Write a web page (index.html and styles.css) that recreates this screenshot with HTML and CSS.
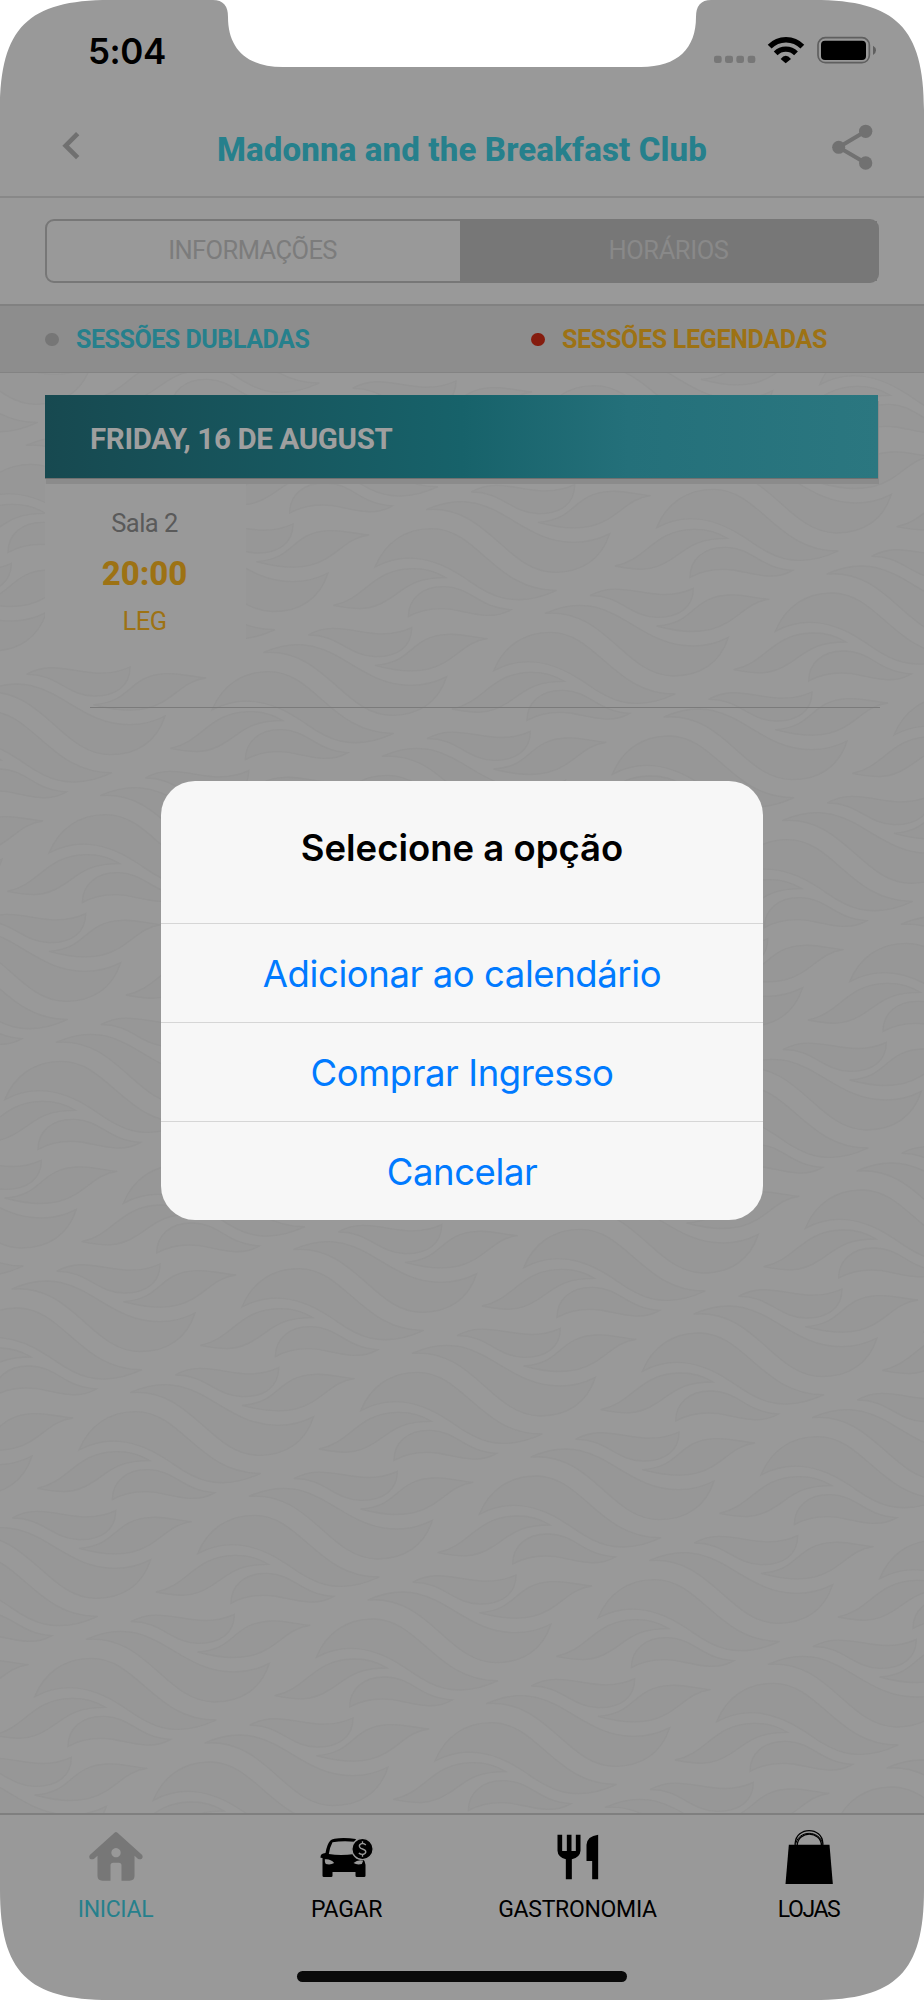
FILE: index.html
```html
<!DOCTYPE html>
<html lang="pt-BR">
<head>
    <meta charset="UTF-8">
    <meta name="viewport" content="width=device-width, initial-scale=1.0">
    <title>Madonna and the Breakfast Club</title>
    <link rel="stylesheet" href="styles.css">
</head>
<body>
    <div class="screen">
        <!-- Status bar -->
        <div class="status-bar">
            <span class="clock">5:04</span>
            <svg class="status-icons" viewBox="756 105 489 90">
                <g fill="#777">
                    <rect x="756" y="167" width="23" height="22" rx="7"/>
                    <rect x="789" y="167" width="24" height="22" rx="7"/>
                    <rect x="823" y="167" width="23" height="22" rx="7"/>
                    <rect x="857" y="167" width="23" height="22" rx="7"/>
                </g>
                <g fill="none" stroke="#000" stroke-width="16">
                    <path d="M923 140 A68 68 0 0 1 1021 140"/>
                    <path d="M941 160 A43 43 0 0 1 1002 160"/>
                </g>
                <path d="M956 177 Q971 158 987 177 L971 190 Z"/>
                <rect x="1068" y="113" width="154" height="75" rx="22" fill="none" stroke="#5f5f5f" stroke-width="5"/>
                <rect x="1077" y="122" width="135" height="58" rx="12"/>
                <path d="M1233 137 Q1242 142 1242 151 Q1242 160 1233 165 Z" fill="#5f5f5f"/>
            </svg>
        </div>

        <!-- Header -->
        <div class="header">
            <svg class="back-icon" viewBox="186 393 54 90">
                <path d="M233 401 L197 437 L233 473" fill="none" stroke="#707070" stroke-width="14"/>
            </svg>
            <h1>Madonna and the Breakfast Club</h1>
            <svg class="share-icon" viewBox="1110 370 123 138">
                <path d="M1211 392 L1130 440 L1211 487" fill="none" stroke="#717171" stroke-width="12"/>
                <g fill="#717171">
                    <circle cx="1130" cy="440" r="19.5"/>
                    <circle cx="1211" cy="392" r="20"/>
                    <circle cx="1211" cy="487" r="20"/>
                </g>
            </svg>
        </div>

        <!-- Tabs -->
        <div class="segments">
            <div class="segment">INFORMAÇÕES</div>
            <div class="segment active">HORÁRIOS</div>
        </div>

        <!-- Legend -->
        <div class="legend">
            <div class="legend-item"><i class="dot"></i><span>SESSÕES DUBLADAS</span></div>
            <div class="legend-item leg"><i class="dot red"></i><span>SESSÕES LEGENDADAS</span></div>
        </div>

        <!-- Sessions -->
        <div class="content">
            <svg class="waves" width="924" height="1440" viewBox="0 373 924 1440">
                <defs>
                    <g id="leaves">
                        <path d="M470 143 C500 70 560 28 640 28 C780 28 830 215 1015 213 C860 285 780 200 730 170 C640 110 550 100 470 143 Z"/>
                        <path d="M345 258 C440 240 460 150 580 148 C620 147 650 155 682 175 C580 175 560 210 510 240 C450 280 400 268 345 258 Z"/>
                        <path d="M570 292 C570 240 610 200 680 202 C760 205 780 265 878 271 C820 305 760 280 700 270 C650 264 610 270 570 292 Z"/>
                        <path d="M270 347 C370 290 460 380 580 325 C580 380 540 413 470 412 C390 410 360 345 270 347 Z"/>
                        <path d="M470 438 C590 430 570 350 690 345 C730 343 765 355 808 358 C700 370 700 500 470 438 Z"/>
                        <path d="M135 400 C340 310 400 500 580 498 C620 498 650 490 685 472 C660 550 600 588 520 588 C370 585 320 385 135 400 Z"/>
                    </g>
                    <g id="leaf-row">
                        <use href="#leaves" x="-1780" y="-1555"/>
                        <use href="#leaves" x="-1424" y="-1244"/>
                        <use href="#leaves" x="-1068" y="-933"/>
                        <use href="#leaves" x="-712" y="-622"/>
                        <use href="#leaves" x="-356" y="-311"/>
                        <use href="#leaves"/>
                        <use href="#leaves" x="356" y="311"/>
                        <use href="#leaves" x="712" y="622"/>
                        <use href="#leaves" x="1068" y="933"/>
                        <use href="#leaves" x="1424" y="1244"/>
                        <use href="#leaves" x="1780" y="1555"/>
                        <use href="#leaves" x="2136" y="1866"/>
                        <use href="#leaves" x="2492" y="2177"/>
                        <use href="#leaves" x="2848" y="2488"/>
                    </g>
                </defs>
                <g transform="translate(500 480) scale(.33333)" fill="#979797" stroke="#949494" stroke-width="4">
                    <use href="#leaf-row" x="978" y="-858"/>
                    <use href="#leaf-row" x="489" y="-429"/>
                    <use href="#leaf-row"/>
                    <use href="#leaf-row" x="-489" y="429"/>
                    <use href="#leaf-row" x="-978" y="858"/>
                    <use href="#leaf-row" x="-1467" y="1287"/>
                    <use href="#leaf-row" x="-1956" y="1716"/>
                    <use href="#leaf-row" x="-2445" y="2145"/>
                    <use href="#leaf-row" x="-2934" y="2574"/>
                    <use href="#leaf-row" x="-3423" y="3003"/>
                </g>
            </svg>
            <div class="day">FRIDAY, 16 DE AUGUST</div>
            <div class="session">
                <span class="room">Sala 2</span>
                <span class="time">20:00</span>
                <span class="lang">LEG</span>
            </div>
            <div class="divider"></div>
        </div>

        <!-- Bottom navigation -->
        <div class="tab-bar">
            <div class="tab current">
                <svg viewBox="256.5 108 180 180">
                    <path fill-rule="evenodd" d="M342 128 Q346 124 351 128 L425 195 Q429 201 424 206 Q418 210 412 206 L402 197 V258 Q402 272 387 272 H363 V226 Q363 218 355 218 H338 Q330 218 330 226 V272 H306 Q291 272 291 258 V197 L281 206 Q275 210 268 206 Q264 200 268 195 Z M346.5 174 a14 14 0 1 0 .1 0 Z" fill="#777"/>
                </svg>
                <span>INICIAL</span>
            </div>
            <div class="tab">
                <svg viewBox="949.5 108 180 180">
                    <path fill-rule="evenodd" d="M975 189 Q980 161 989 152 Q993 147 1002 146 Q1032 142 1066 147 V205 L1087 208 Q1095 213 1095 224 V257 Q1095 261 1091 261 H1069 Q1065 261 1065 257 V246 H996 V257 Q996 261 992 261 H970 Q966 261 966 257 V204 L960 203 Q959 190 975 189 Z M996 157 Q988 172 985 192 Q1020 198 1062 192 V155 Q1025 151 996 157 Z"/>
                    <path d="M973 208 Q990 206 1001 219 Q990 226 976 222 Q972 216 973 208 Z M1088 212 Q1072 208 1059 219 Q1070 226 1084 222 Z" fill="#999"/>
                    <circle cx="1086" cy="177" r="32" stroke="#999" stroke-width="4"/>
                    <path d="M1096 165 Q1090 159 1083 161 Q1075 164 1077 170 Q1079 175 1086 177 Q1096 180 1096 186 Q1094 193 1085 193 Q1079 193 1075 189 M1086 154 V162 M1086 192 V200" fill="none" stroke="#999" stroke-width="4"/>
                </svg>
                <span>PAGAR</span>
            </div>
            <div class="tab">
                <svg viewBox="256.5 108 180 180">
                    <path d="M285 134 H299 V183 H313 V134 H327 V183 H340 V134 H354 V182 Q353 201 328 208 V268 H310 V208 Q286 201 285 182 Z"/>
                    <path d="M407 134 V268 H389 V213 H372 V164 Q374 138 407 134 Z"/>
                </svg>
                <span>GASTRONOMIA</span>
            </div>
            <div class="tab shops">
                <svg viewBox="949.5 108 180 180">
                    <path d="M979 164 H1101 L1111 282 H969 Z"/>
                    <path d="M998 166 V160 C1001 109 1079 109 1081 160 V166 M1004 166 C1006 121 1075 121 1077 166" fill="none" stroke="#000" stroke-width="4"/>
                    <path d="M1000 160 C1010 120 1070 120 1080 160" fill="none" stroke="#000" stroke-width="3"/>
                </svg>
                <span>LOJAS</span>
            </div>
        </div>
        <div class="home-indicator"></div>

        <!-- Alert -->
        <div class="alert">
            <h2>Selecione a opção</h2>
            <button type="button">Adicionar ao calendário</button>
            <button type="button">Comprar Ingresso</button>
            <button type="button">Cancelar</button>
        </div>

        <!-- Device notch and rounded corners -->
        <svg class="bezel" viewBox="0 0 924 2000" fill="#fff">
            <path d="M213 0 Q228 0 228 17 C228 48 246 67 283 67 H641 C678 67 696 48 696 17 Q696 0 711 0 Z"/>
            <path d="M0 0 H110 C28 0 0 28 0 110 Z"/>
            <path d="M924 0 H814 C896 0 924 28 924 110 Z"/>
            <path d="M0 2000 H110 C28 2000 0 1972 0 1890 Z"/>
            <path d="M924 2000 H814 C896 2000 924 1972 924 1890 Z"/>
        </svg>
    </div>
</body>
</html>
```
FILE: styles.css
```css
body {
    margin: 0;
    background-color: #fff;
    font-family: Roboto, "Open Sans", sans-serif;
}

.screen {
    position: relative;
    width: 924px;
    height: 2000px;
    background-color: #999;
    display: flex;
    flex-direction: column;
    overflow: hidden;
}

span {
    white-space: nowrap;
}

/* status bar */
.status-bar {
    height: 100px;
    box-sizing: border-box;
    padding: 31px 47px 0 88px;
    display: flex;
    justify-content: space-between;
    align-items: flex-start;
}

.clock {
    font-family: Inter, sans-serif;
    font-weight: 600;
    font-size: 35px;
    line-height: 40px;
    letter-spacing: -0.4px;
}

.status-icons {
    width: 163px;
    height: 30px;
    margin-top: 4px;
}

/* header */
.header {
    height: 98px;
    box-sizing: border-box;
    padding: 0 51px 0 62px;
    border-bottom: 2px solid #888;
    display: flex;
    justify-content: space-between;
    align-items: flex-start;
}

.back-icon {
    width: 18px;
    height: 30px;
    margin-top: 31px;
}

.share-icon {
    width: 41px;
    height: 46px;
    margin-top: 24px;
}

.header h1 {
    margin: 31px 0 0 12px;
    font-size: 33px;
    line-height: 38px;
    font-weight: 800;
    letter-spacing: 0.15px;
    color: #26808c;
    white-space: nowrap;
}

/* segmented control */
.segments {
    display: flex;
    height: 64px;
    box-sizing: border-box;
    margin: 21px 45px;
    border: 2px solid #777;
    border-radius: 9px;
}

.segment {
    flex: 0 0 411px;
    text-align: center;
    font-size: 25.5px;
    line-height: 58px;
    letter-spacing: -0.6px;
    padding-right: 2px;
    color: #7c7c7c;
}

.segment.active {
    flex: 1;
    padding-right: 0;
    background-color: #777;
    color: #898989;
    letter-spacing: -0.4px;
}

/* legend */
.legend {
    display: flex;
    height: 69px;
    box-sizing: border-box;
    border-top: 2px solid #818181;
    border-bottom: 1px solid #838383;
    background-color: #8d8d8d;
    padding-left: 45px;
}

.legend-item {
    width: 486px;
    flex: none;
    display: flex;
    align-items: center;
    gap: 17.5px;
    font-size: 25px;
    font-weight: 700;
    letter-spacing: -0.45px;
    color: #26808c;
}

.legend-item.leg {
    width: 348px;
    letter-spacing: -0.3px;
    color: #9d7214;
}

.dot {
    width: 13.5px;
    height: 13.5px;
    border-radius: 50%;
    background-color: #767676;
    margin-top: 1px;
}

.dot.red {
    background-color: #851c0e;
}

/* sessions */
.content {
    position: relative;
    height: 1440px;
    box-sizing: border-box;
    padding: 22px 45px 0;
}

.waves {
    position: absolute;
    left: 0;
    top: 0;
}

.day {
    position: relative;
    width: 832.5px;
    height: 83px;
    box-sizing: border-box;
    padding-left: 45px;
    background: linear-gradient(to right, #174950, #17626a 50%, #24707a 70%, #2b7780);
    box-shadow: 0 1px 0 #707070, 1px 6px 0 #8b8b8b;
    color: #9f9f9f;
    font-size: 29.5px;
    font-weight: 700;
    letter-spacing: -0.35px;
    line-height: 88px;
}

.session {
    position: relative;
    width: 201px;
    height: 176px;
    box-sizing: border-box;
    margin-top: 6px;
    padding-top: 19px;
    background-color: #999;
    display: flex;
    flex-direction: column;
}

.session span {
    width: 199px;
    text-align: center;
    line-height: 40px;
}

.room {
    font-size: 25.5px;
    letter-spacing: -0.5px;
    color: #5a5a5a;
}

.time {
    margin-top: 11px;
    font-size: 33px;
    font-weight: 800;
    color: #9d7214;
}

.lang {
    margin-top: 7px;
    font-size: 25.5px;
    letter-spacing: -0.5px;
    color: #9d7214;
}

.divider {
    position: relative;
    height: 1px;
    margin: 47px -1px 0 44.5px;
    background-color: #7b7b7b;
}

/* bottom navigation */
.tab-bar {
    display: grid;
    grid-template-columns: repeat(4, 1fr);
    height: 158px;
    box-sizing: border-box;
    border-top: 2px solid #7f7f7f;
}

.tab {
    display: flex;
    flex-direction: column;
    align-items: center;
    padding-top: 11px;
    font-size: 23px;
    line-height: 30px;
    letter-spacing: -0.3px;
    color: #000;
}

.tab svg {
    width: 60px;
    height: 60px;
    margin-bottom: 9px;
}

.tab.current {
    color: #26808c;
}

.tab.shops {
    letter-spacing: -1.4px;
}

.home-indicator {
    width: 330px;
    height: 11px;
    margin: 0 auto;
    border-radius: 6px;
    background-color: #0a0a0a;
}

/* alert */
.alert {
    position: absolute;
    left: 161px;
    top: 780.5px;
    width: 602px;
    height: 439.5px;
    border-radius: 34px;
    background-color: #f7f7f7;
    overflow: hidden;
    font-family: Inter, sans-serif;
}

.alert h2 {
    margin: 0;
    height: 142px;
    text-align: center;
    font-size: 36.5px;
    font-weight: 600;
    line-height: 134px;
    color: #000;
}

.alert button {
    display: block;
    width: 100%;
    height: 99px;
    box-sizing: border-box;
    padding: 1px 0 0;
    border: none;
    border-top: 1px solid #d6d6d6;
    background: none;
    font-family: inherit;
    font-size: 36.5px;
    line-height: 98px;
    letter-spacing: -0.42px;
    color: #007aff;
}

.bezel {
    position: absolute;
    left: 0;
    top: 0;
    width: 924px;
    height: 2000px;
}
```
